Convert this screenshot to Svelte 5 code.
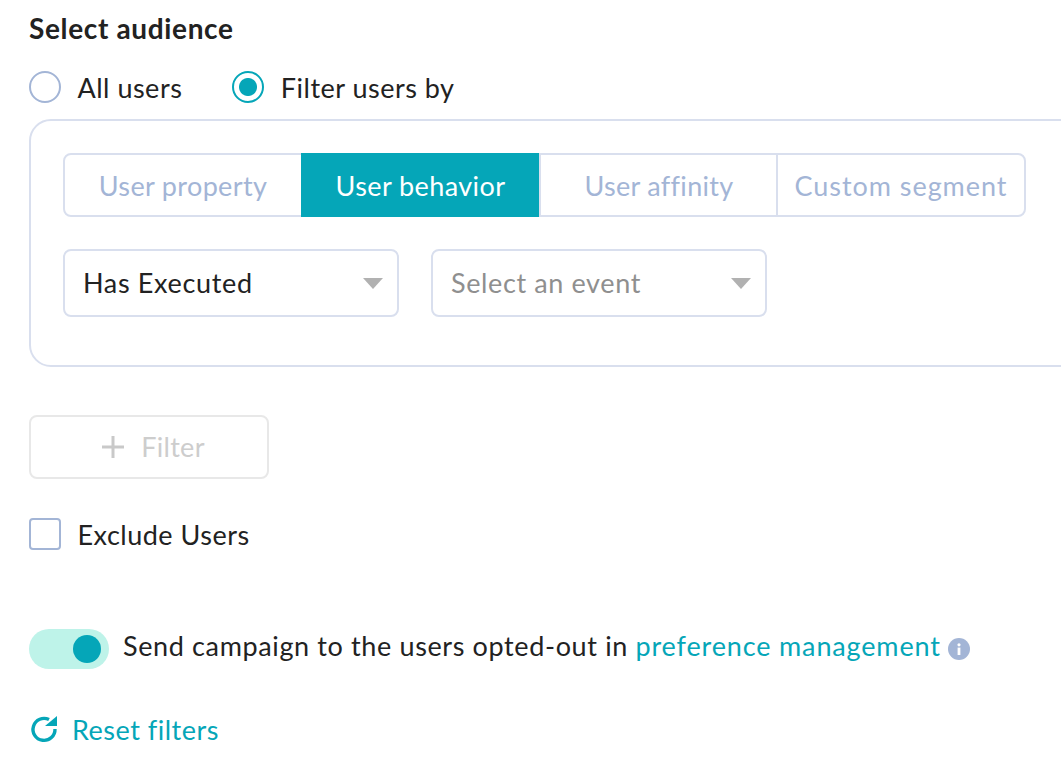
<script>
  let audience = $state('filter');
  let activeTab = $state('User behavior');
  const tabs = ['User property', 'User behavior', 'User affinity', 'Custom segment'];
</script>

<div class="page">
  <h2 class="heading">Select audience</h2>

  <div class="radios">
    <button class="radio" onclick={() => (audience = 'all')}>
      <span class="dot" class:on={audience === 'all'}></span>All users
    </button>
    <button class="radio" onclick={() => (audience = 'filter')}>
      <span class="dot" class:on={audience === 'filter'}></span>Filter users by
    </button>
  </div>

  <div class="panel">
    <div class="tabs">
      {#each tabs as tab}
        <button class="tab" class:active={activeTab === tab} onclick={() => (activeTab = tab)}>{tab}</button>
      {/each}
    </div>
    <div class="selects">
      <div class="select">
        <span>Has Executed</span>
        <i class="caret"></i>
      </div>
      <div class="select placeholder">
        <span>Select an event</span>
        <i class="caret"></i>
      </div>
    </div>
  </div>

  <button class="add-filter">
    <svg width="24" height="24" viewBox="0 0 24 24"><path d="M12 1v22M1 12h22" stroke="#c9c9c9" stroke-width="3" fill="none" /></svg>
    <span>Filter</span>
  </button>

  <label class="exclude"><span class="box"></span>Exclude Users</label>

  <div class="optout">
    <span class="toggle"><span class="knob"></span></span>
    <span class="optout-text">Send campaign to the users opted-out in <a href="#pref">preference management</a></span>
    <svg class="info" width="22" height="22" viewBox="0 0 22 22">
      <circle cx="11" cy="11" r="11" fill="#a3b5d6" />
      <circle cx="11" cy="6.8" r="1.6" fill="#fff" />
      <rect x="9.6" y="9.6" width="2.8" height="7.4" fill="#fff" />
    </svg>
  </div>

  <a class="reset" href="#reset">
    <svg width="28" height="28" viewBox="0 0 28 28">
      <path d="M26 14A11 11 0 1 1 20 4.6" fill="none" stroke="#05a6b8" stroke-width="3.4" />
      <path d="M16 11H28V1z" fill="#05a6b8" />
    </svg>
    Reset filters
  </a>
</div>

<style>
  :global(body) {
    margin: 0;
    background: #fff;
    overflow: hidden;
  }
  .page {
    width: 1061px;
    height: 776px;
    overflow: hidden;
    box-sizing: border-box;
    padding: 11px 0 0 29px;
    font-family: "Lato", sans-serif;
    font-size: 27px;
    color: #222;
    letter-spacing: 0.5px;
  }
  button {
    font: inherit;
    letter-spacing: inherit;
    background: none;
    border: none;
    padding: 0;
    color: inherit;
  }
  .heading {
    margin: 0;
    font-size: 28px;
    line-height: 34px;
    font-weight: 700;
    letter-spacing: 0.65px;
  }
  .radios {
    display: flex;
    gap: 50px;
    margin-top: 26px;
    height: 32px;
  }
  .radio {
    display: flex;
    align-items: center;
    gap: 16.5px;
  }
  .dot {
    width: 32px;
    height: 32px;
    box-sizing: border-box;
    border: 2px solid #a3b5d6;
    border-radius: 50%;
    background: #fff;
  }
  .dot.on {
    border-color: #05a6b8;
    background: radial-gradient(circle, #05a6b8 0 8.5px, #fff 9.5px);
  }
  .panel {
    width: 1080px;
    height: 248px;
    box-sizing: border-box;
    margin-top: 16px;
    padding: 32px;
    border: 2px solid #d9dfee;
    border-radius: 22px;
  }
  .tabs {
    display: flex;
    width: 963px;
    height: 64px;
    box-sizing: border-box;
    border: 2px solid #d9dfee;
    border-radius: 8px;
  }
  .tab {
    flex: 0 0 auto;
    width: 238px;
    margin-top: -2px;
    margin-bottom: -2px;
    color: #a3b5d6;
    white-space: nowrap;
    border-top: 2px solid transparent;
    border-bottom: 2px solid transparent;
  }
  .tab:nth-child(1) {
    width: 236px;
    letter-spacing: 0.35px;
  }
  .tab:nth-child(3) {
    width: 239px;
    padding-left: 1px;
    letter-spacing: 0.3px;
    border-left: 2px solid #d9dfee;
    border-right: 2px solid #d9dfee;
  }
  .tab:nth-child(4) {
    width: auto;
    flex: 1;
    letter-spacing: 0.95px;
  }
  .tab.active {
    background: #05a6b8;
    color: #fff;
    padding-left: 1px;
    letter-spacing: 0.42px;
    border-top: none;
    border-bottom: none;
  }
  .selects {
    display: flex;
    gap: 32px;
    margin-top: 32px;
  }
  .select {
    width: 336px;
    height: 68px;
    box-sizing: border-box;
    display: flex;
    align-items: center;
    justify-content: space-between;
    padding: 0 14px 0 18px;
    border: 2px solid #d9dfee;
    border-radius: 8px;
    letter-spacing: 0.65px;
  }
  .select span {
    margin-bottom: 2px;
  }
  .select.placeholder {
    color: #8f8f8f;
    letter-spacing: 0.62px;
  }
  .caret {
    width: 0;
    height: 0;
    border-left: 10px solid transparent;
    border-right: 10px solid transparent;
    border-top: 11px solid #b1b1b1;
  }
  .add-filter {
    display: flex;
    align-items: center;
    justify-content: center;
    gap: 16px;
    width: 240px;
    height: 64px;
    box-sizing: border-box;
    margin-top: 48px;
    padding-left: 8px;
    color: #cdcdcd;
    letter-spacing: 0.3px;
    border: 2px solid #e8e8e8;
    border-radius: 8px;
  }
  .add-filter span {
    margin-bottom: 2px;
  }
  .exclude {
    display: flex;
    align-items: center;
    gap: 16.5px;
    margin-top: 39px;
    height: 32px;
  }
  .box {
    width: 32px;
    height: 32px;
    box-sizing: border-box;
    border: 2px solid #a3b5d6;
    border-radius: 4px;
  }
  .optout {
    display: flex;
    align-items: center;
    margin-top: 79px;
    height: 40px;
  }
  .toggle {
    display: flex;
    align-items: center;
    justify-content: flex-end;
    width: 80px;
    height: 40px;
    box-sizing: border-box;
    padding-right: 8px;
    border-radius: 20px;
    background: #bef3e9;
  }
  .knob {
    width: 28px;
    height: 28px;
    border-radius: 50%;
    background: #05a6b8;
  }
  .optout-text {
    margin: 0 0 8px 14px;
    white-space: nowrap;
    letter-spacing: 0.63px;
  }
  .optout-text a {
    letter-spacing: 0.85px;
  }
  a {
    color: #05a6b8;
    text-decoration: none;
  }
  .info {
    margin-left: 7px;
  }
  .reset {
    display: flex;
    align-items: center;
    gap: 15px;
    margin-top: 43px;
    height: 34px;
  }
</style>
